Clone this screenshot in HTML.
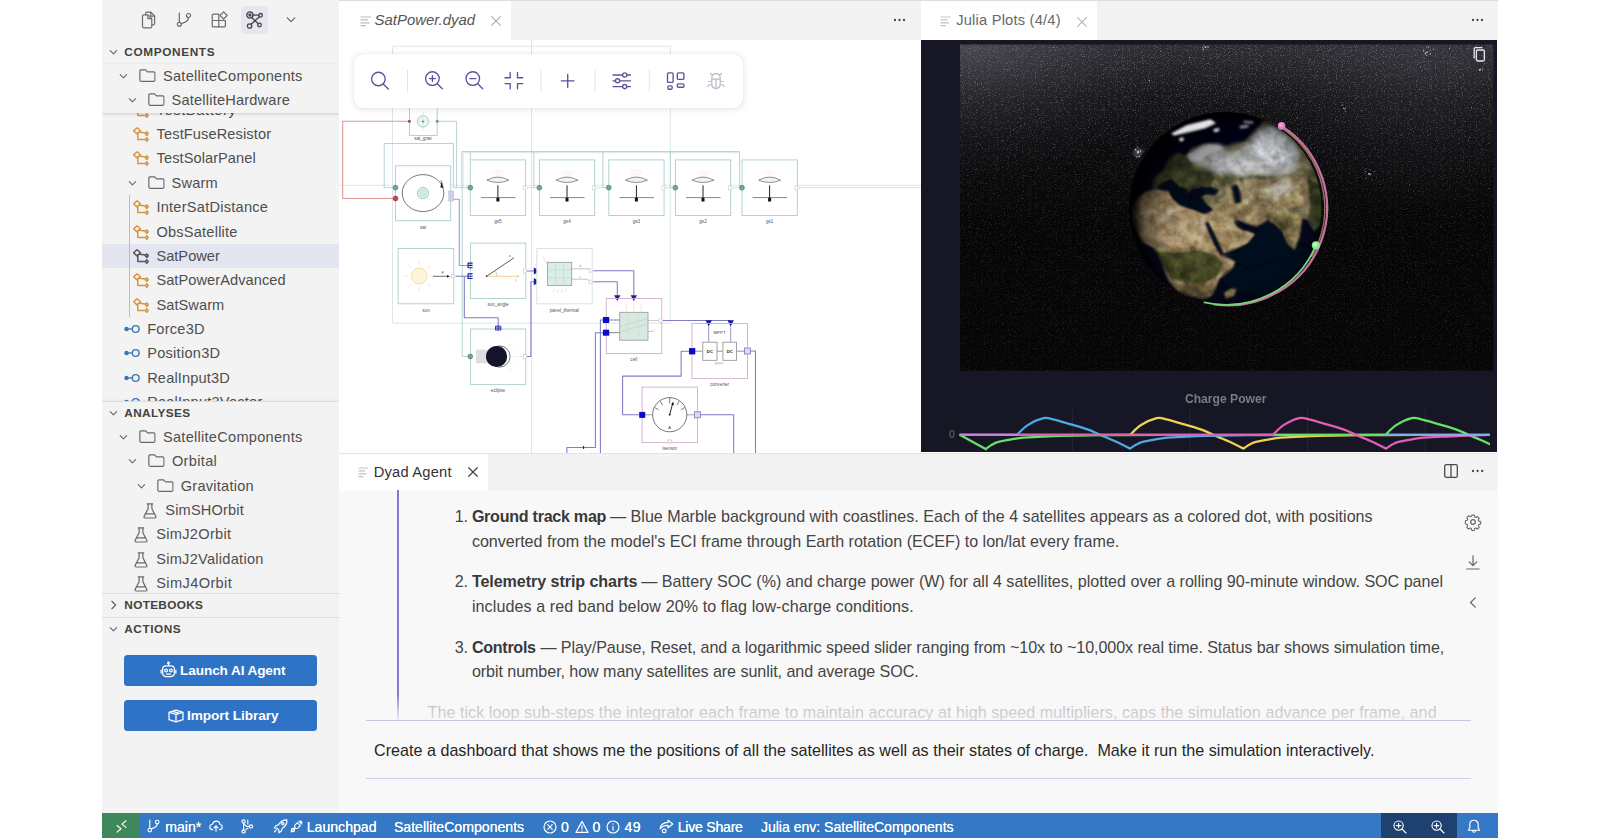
<!DOCTYPE html>
<html>
<head>
<meta charset="utf-8">
<title>Dyad Studio</title>
<style>
*{box-sizing:border-box;margin:0;padding:0}
html,body{width:1600px;height:838px;overflow:hidden;background:#fff;font-family:"Liberation Sans",sans-serif;color:#3b3b3b}
.abs{position:absolute}
#sidebar{position:absolute;left:102px;top:0;width:237px;height:813px;background:#f3f3f3;overflow:hidden}
#ed1{position:absolute;left:339px;top:0;width:582px;height:453px;background:#fff;overflow:hidden}
#ed2{position:absolute;left:921px;top:0;width:577px;height:453px;background:#fff;overflow:hidden}
#panel{position:absolute;left:339px;top:453px;width:1159px;height:360px;background:#f8f8f8;overflow:hidden}
#status{position:absolute;left:102px;top:813px;width:1396px;height:25px;background:#3579c6;color:#fff;overflow:hidden;font-size:14.3px}
.tabbar{position:absolute;left:0;top:0;width:100%;height:40px;background:#f3f3f3;border-top:1px solid #dcdcdc}
.tab{position:absolute;top:0;height:39px;background:#fff}
.row{position:absolute;left:0;width:237px;height:24px;font-size:14.6px;line-height:25px;color:#4e4e4e;white-space:nowrap}
.row span{position:absolute;top:0}
.hdr{position:absolute;left:0;width:237px;height:24px;font-size:11.8px;line-height:25px;font-weight:bold;color:#424242;white-space:nowrap}
.hdr span{position:absolute;top:0}
svg{position:absolute;overflow:visible}
.st{position:absolute;top:1px;height:25px;line-height:26px;white-space:nowrap}
</style>
</head>
<body>
<!-- SIDEBAR -->
<div id="sidebar">
<svg width="0" height="0" style="left:0;top:0"><defs>
<symbol id="chd" viewBox="0 0 10 8"><path d="M1.3 1.9 5 5.6l3.7-3.7" fill="none" stroke="#666" stroke-width="1.25" stroke-linecap="round" stroke-linejoin="round"/></symbol>
<symbol id="chr" viewBox="0 0 8 10"><path d="M1.9 1.3 5.6 5 1.9 8.7" fill="none" stroke="#666" stroke-width="1.25" stroke-linecap="round" stroke-linejoin="round"/></symbol>
<symbol id="fold" viewBox="0 0 18 14"><path d="M2.2 .9h4.6c.4 0 .7.2.9.5l.9 1.3c.2.3.5.4.9.4h6.3c.7 0 1.3.6 1.3 1.3v7.5c0 .7-.6 1.3-1.3 1.3H2.2c-.7 0-1.3-.6-1.3-1.3V2.2C.9 1.500 1.500.9 2.2.9z" fill="none" stroke="#686868" stroke-width="1.25" stroke-linejoin="round"/></symbol>
<symbol id="cmp" viewBox="0 0 16 15"><g fill="none" stroke-width="1.500" stroke-linejoin="round" stroke-linecap="round"><path d="M4 .800 7.500 3.800 4 6.900.600 3.800z" fill="rgba(255,238,208,.7)"/><path d="M6.300 5.200c2.300.300 4.200.300 6 .800"/><path d="M4.800 6.600v6h7.200"/><path d="M13.800 4.900 15.200 6.700 13.800 8.500 12.400 6.700z"/><path d="M13.800 10.800 15.200 12.600 13.800 14.300 12.400 12.600z"/></g></symbol>
<symbol id="con" viewBox="0 0 16 10"><path d="M3 5h5" stroke="#3f75b0" stroke-width="1.4"/><circle cx="2.500" cy="5" r="2.200" fill="#3f75b0"/><circle cx="11.700" cy="5" r="3.400" fill="#eef4fb" stroke="#3f75b0" stroke-width="1.400"/></symbol>
<symbol id="bk" viewBox="0 0 14 16"><path d="M4.300.900h5.400M5.100.900v4.900L1.100 13.400c-.400.800.100 1.600 1 1.600h9.800c.900 0 1.400-.800 1-1.600L8.900 5.800V.900M2.900 10.800h8.200" fill="none" stroke="#686868" stroke-width="1.200" stroke-linecap="round" stroke-linejoin="round"/></symbol>
</defs></svg>
<div class="abs" style="left:139px;top:6px;width:27px;height:28px;background:#e5e6f0;border-radius:4px"></div>
<svg style="left:39px;top:11px" width="15" height="18" viewBox="0 0 15 18"><g fill="none" stroke="#6a6a6a" stroke-width="1.2" stroke-linejoin="round"><path d="M4.600 3.800V2.400c0-.700.500-1.200 1.200-1.200h4l3.800 3.800v7.600c0 .700-.500 1.200-1.200 1.200h-1.600"/><path d="M9.700 1.300v3.800h3.800"/><path d="M1.500 5c0-.700.500-1.200 1.200-1.200h4.300l3.800 3.800v8c0 .700-.500 1.200-1.200 1.200h-6.900c-.700 0-1.200-.500-1.200-1.200z"/><path d="M6.900 3.900v3.800h3.800"/></g></svg>
<svg style="left:74px;top:12px" width="16" height="16" viewBox="0 0 16 16"><g fill="none" stroke="#6a6a6a" stroke-width="1.2" stroke-linecap="round"><circle cx="3.300" cy="12.300" r="2"/><circle cx="12.500" cy="3.500" r="2"/><path d="M3.300 10.300V1.200"/><path d="M12.500 5.500c0 3.800-3.400 5.200-7.300 6.200"/></g></svg>
<svg style="left:109px;top:11px" width="18" height="17" viewBox="0 0 18 17"><g fill="none" stroke="#6a6a6a" stroke-width="1.2" stroke-linejoin="round"><path d="M1.200 4.200c0-.600.500-1.100 1.100-1.100h5.500v12.800H2.300c-.600 0-1.100-.500-1.100-1.100z"/><path d="M1.200 9.500h13.200v5.300c0 .600-.500 1.100-1.100 1.100H7.800"/><path d="M12.600.800l3.600 3.600-3.600 3.600-3.600-3.600z"/></g></svg>
<svg style="left:143px;top:10px" width="20" height="20" viewBox="0 0 20 20"><g fill="none" stroke="#444" stroke-width="1.300" stroke-linecap="round"><circle cx="4.900" cy="5" r="3.100"/><circle cx="4.900" cy="5" r="1" /><circle cx="15.600" cy="5.300" r="1.800"/><circle cx="14.500" cy="15" r="1.800"/><circle cx="4.600" cy="16" r="2.200"/><path d="M8 5.100h5.800M6.800 7.500l6.500 6.300M14.400 6.700 6 14.300"/></g></svg>
<svg style="left:184px;top:16px" width="10" height="8"><use href="#chd"/></svg>
<div class="hdr" style="top:40px"><svg style="left:7px;top:9px" width="8.800" height="7" viewBox="0 0 10 8"><use href="#chd"/></svg><span style="left:22.29px;letter-spacing:0.635px">COMPONENTS</span></div>
<div class="row" style="top:98px;"><svg style="left:30.6px;top:5px;stroke:#d39644" width="16" height="15"><use href="#cmp"/></svg><span style="left:54.59px;letter-spacing:0.627px">TestBattery</span></div>
<div class="abs" style="left:0;top:64px;width:237px;height:49px;background:#f3f3f3;box-shadow:0 1px 3px rgba(0,0,0,.16)"></div>
<div class="row" style="top:64px;"><svg style="left:17.2px;top:9px" width="8.800" height="7" viewBox="0 0 10 8"><use href="#chd"/></svg><svg style="left:36.9px;top:5.400px" width="16.800" height="13.100" viewBox="0 0 18 14"><use href="#fold"/></svg><span style="left:60.99px;letter-spacing:0.263px">SatelliteComponents</span></div>
<div class="row" style="top:88px;"><svg style="left:25.9px;top:9px" width="8.800" height="7" viewBox="0 0 10 8"><use href="#chd"/></svg><svg style="left:45.7px;top:5.400px" width="16.800" height="13.100" viewBox="0 0 18 14"><use href="#fold"/></svg><span style="left:69.49px;letter-spacing:0.199px">SatelliteHardware</span></div>
<div class="row" style="top:122px;"><svg style="left:30.6px;top:5px;stroke:#d39644" width="16" height="15"><use href="#cmp"/></svg><span style="left:54.59px;letter-spacing:0.115px">TestFuseResistor</span></div>
<div class="row" style="top:146px;"><svg style="left:30.6px;top:5px;stroke:#d39644" width="16" height="15"><use href="#cmp"/></svg><span style="left:54.59px;letter-spacing:0.073px">TestSolarPanel</span></div>
<div class="row" style="top:171px;"><svg style="left:25.9px;top:9px" width="8.800" height="7" viewBox="0 0 10 8"><use href="#chd"/></svg><svg style="left:45.7px;top:5.400px" width="16.800" height="13.100" viewBox="0 0 18 14"><use href="#fold"/></svg><span style="left:69.49px;letter-spacing:0.199px">Swarm</span></div>
<div class="row" style="top:195px;"><svg style="left:30.6px;top:5px;stroke:#d39644" width="16" height="15"><use href="#cmp"/></svg><span style="left:54.39px;letter-spacing:0.243px">InterSatDistance</span></div>
<div class="row" style="top:220px;"><svg style="left:30.6px;top:5px;stroke:#d39644" width="16" height="15"><use href="#cmp"/></svg><span style="left:54.39px;letter-spacing:0.217px">ObsSatellite</span></div>
<div class="row" style="top:244px;background:#e3e5f0;"><svg style="left:30.6px;top:5px;stroke:#555" width="16" height="15"><use href="#cmp"/></svg><span style="left:54.39px;letter-spacing:0.028px">SatPower</span></div>
<div class="row" style="top:268px;"><svg style="left:30.6px;top:5px;stroke:#d39644" width="16" height="15"><use href="#cmp"/></svg><span style="left:54.39px;letter-spacing:0.074px">SatPowerAdvanced</span></div>
<div class="row" style="top:293px;"><svg style="left:30.6px;top:5px;stroke:#d39644" width="16" height="15"><use href="#cmp"/></svg><span style="left:54.39px;letter-spacing:0.085px">SatSwarm</span></div>
<div class="abs" style="left:27px;top:195px;width:1px;height:122px;background:#bcbcbc"></div>
<div class="row" style="top:317px;"><svg style="left:22.0px;top:7px" width="16" height="10"><use href="#con"/></svg><span style="left:45.19px;letter-spacing:0.248px">Force3D</span></div>
<div class="row" style="top:341px;"><svg style="left:22.0px;top:7px" width="16" height="10"><use href="#con"/></svg><span style="left:45.19px;letter-spacing:0.262px">Position3D</span></div>
<div class="row" style="top:366px;"><svg style="left:22.0px;top:7px" width="16" height="10"><use href="#con"/></svg><span style="left:45.19px;letter-spacing:0.142px">RealInput3D</span></div>
<div class="row" style="top:390px;"><svg style="left:22.0px;top:7px" width="16" height="10"><use href="#con"/></svg><span style="left:45.19px;letter-spacing:0.207px">RealInput3Vector</span></div>
<div class="abs" style="left:0;top:401px;width:237px;height:412px;background:#f3f3f3;border-top:1px solid #dcdcdc;box-shadow:0 -1px 2px rgba(0,0,0,.05)"></div>
<div class="hdr" style="top:401px"><svg style="left:7px;top:9px" width="8.800" height="7" viewBox="0 0 10 8"><use href="#chd"/></svg><span style="left:22.29px;letter-spacing:0.369px">ANALYSES</span></div>
<div class="row" style="top:425px;"><svg style="left:17.2px;top:9px" width="8.800" height="7" viewBox="0 0 10 8"><use href="#chd"/></svg><svg style="left:36.9px;top:5.400px" width="16.800" height="13.100" viewBox="0 0 18 14"><use href="#fold"/></svg><span style="left:60.99px;letter-spacing:0.258px">SatelliteComponents</span></div>
<div class="row" style="top:449px;"><svg style="left:25.9px;top:9px" width="8.800" height="7" viewBox="0 0 10 8"><use href="#chd"/></svg><svg style="left:45.7px;top:5.400px" width="16.800" height="13.100" viewBox="0 0 18 14"><use href="#fold"/></svg><span style="left:69.89px;letter-spacing:0.331px">Orbital</span></div>
<div class="row" style="top:474px;"><svg style="left:34.8px;top:9px" width="8.800" height="7" viewBox="0 0 10 8"><use href="#chd"/></svg><svg style="left:54.6px;top:5.400px" width="16.800" height="13.100" viewBox="0 0 18 14"><use href="#fold"/></svg><span style="left:78.79px;letter-spacing:0.229px">Gravitation</span></div>
<div class="row" style="top:498px;"><svg style="left:40.6px;top:4.500px" width="14" height="16"><use href="#bk"/></svg><span style="left:63.29px;letter-spacing:0.156px">SimSHOrbit</span></div>
<div class="row" style="top:522px;"><svg style="left:31.8px;top:4.500px" width="14" height="16"><use href="#bk"/></svg><span style="left:54.19px;letter-spacing:0.302px">SimJ2Orbit</span></div>
<div class="row" style="top:547px;"><svg style="left:31.8px;top:4.500px" width="14" height="16"><use href="#bk"/></svg><span style="left:54.19px;letter-spacing:0.261px">SimJ2Validation</span></div>
<div class="row" style="top:571px;"><svg style="left:31.8px;top:4.500px" width="14" height="16"><use href="#bk"/></svg><span style="left:54.19px;letter-spacing:0.382px">SimJ4Orbit</span></div>
<div class="abs" style="left:0;top:593px;width:237px;height:220px;background:#f3f3f3;border-top:1px solid #dcdcdc"></div>
<div class="hdr" style="top:593px"><svg style="left:8px;top:7px" width="8" height="10"><use href="#chr"/></svg><span style="left:22.29px;letter-spacing:0.331px">NOTEBOOKS</span></div>
<div class="abs" style="left:0;top:617px;width:237px;height:1px;background:#dcdcdc"></div>
<div class="hdr" style="top:617px"><svg style="left:7px;top:9px" width="8.800" height="7" viewBox="0 0 10 8"><use href="#chd"/></svg><span style="left:22.29px;letter-spacing:0.561px">ACTIONS</span></div>
<div style="position:absolute;left:22px;width:193px;height:31px;background:#2f73c7;border-radius:3.500px;color:#fff;font-weight:bold;font-size:13.600px;line-height:31px;white-space:nowrap;top:655px"><svg style="left:36px;top:6px" width="17" height="18" viewBox="0 0 17 18"><g fill="none" stroke="#fff" stroke-width="1.250" stroke-linecap="round"><rect x="2.600" y="4.900" width="11.800" height="10.600" rx="3.400"/><path d="M8.500 4.700V2.800M1.100 9.200v2.800M15.900 9.200v2.800M6.400 13h4.200"/><circle cx="8.500" cy="2" r=".800" fill="#fff"/><circle cx="6.100" cy="9.400" r="1.400"/><circle cx="10.900" cy="9.400" r="1.400"/></g></svg><span class="abs" style="top:0;left:56.12px;letter-spacing:-0.112px">Launch AI Agent</span></div>
<div style="position:absolute;left:22px;width:193px;height:31px;background:#2f73c7;border-radius:3.500px;color:#fff;font-weight:bold;font-size:13.600px;line-height:31px;white-space:nowrap;top:700px"><svg style="left:44px;top:9px" width="16" height="14" viewBox="0 0 16 14"><g fill="none" stroke="#fff" stroke-width="1.250" stroke-linejoin="round"><path d="M1 3.300 8 1.200l7 2.100v7.400L8 12.800 1 10.700z"/><path d="M1 3.300l7 2 7-2M8 5.300v7.500M4.500 2.300l7 2"/></g></svg><span class="abs" style="top:0;left:62.92px;letter-spacing:-0.031px">Import Library</span></div>
</div>

<!-- EDITOR 1 -->
<div id="ed1">
<svg style="left:0;top:40px" width="582" height="413" viewBox="339 40 582 413" font-family="Liberation Sans, sans-serif">
<g fill="none" stroke="#dbe6ea" stroke-width="1">
<path d="M392.500 323.200V46.300H670.300V323.200H392.500"/>
<path d="M531.500 40V453"/>
<path d="M339 185.300H921" stroke="#dfe7e6"/>
</g>
<path d="M409.400 121.300H342.700V198.500H395.500" fill="none" stroke="#e09a9a" stroke-width="1.100"/>
<g fill="none" stroke="#a9cfce" stroke-width=".850">
<path d="M437.200 121.300H456.600V187.700H470.300"/>
<path d="M395.500 187.700H384.200V143.500H453.400V187.700H456.600"/>
<path d="M461.800 187.700V151.500H739.500V187.700H742"/>
<path d="M463 187.700V152.700H738.300" opacity=".6"/>
<path d="M470.300 151.500V160M533.900 151.500V187.700H539.400M602.900 151.500V187.700H608.800M670.300 151.500V187.700H675.400"/>
<path d="M527.700 187.700H533.900M596.800 187.700H602.900M666 187.700H670.300M732.300 187.700H739.500M799 187.700H921" opacity=".7"/>
<path d="M462.200 187.700V356.500H470.300"/>
</g>
<rect x="409.500" y="107" width="27.700" height="28.400" fill="#fff" stroke="#a9cfce" stroke-width=".900"/>
<circle cx="423" cy="121.400" r="5.600" fill="#eef6f5" stroke="#9cc3c0" stroke-width=".900"/><path d="M423 112v18.800M413.600 121.400h18.800" stroke="#cfe0df" stroke-width=".600"/><circle cx="423" cy="121.400" r="1" fill="#777"/>
<circle cx="409.400" cy="121.300" r="1.500" fill="#8a4a52"/><circle cx="437.200" cy="121.300" r="1.500" fill="#6a9a90"/>
<text x="423" y="140" font-size="4.6" fill="#555" text-anchor="middle" font-weight="normal">sat_grav</text>
<rect x="395.500" y="165.800" width="55.200" height="54.900" fill="#fff" stroke="#a9cfce" stroke-width=".900"/>
<ellipse cx="423" cy="193.100" rx="20.800" ry="18.500" fill="none" stroke="#555" stroke-width=".800"/>
<circle cx="423" cy="193.100" r="5.600" fill="#e4f1f0" stroke="#9cc3c0" stroke-width=".900"/><circle cx="423" cy="193.100" r="3.300" fill="#d5eae8" stroke="#b5d5d2" stroke-width=".500"/>
<path d="M441.500 182.500l2.200 5.300-3.400-.400z" fill="#222"/><path d="M441 180.500l1.600 4" stroke="#222" stroke-width=".700"/>
<rect x="448.700" y="191" width="5" height="10" fill="#cfcfea" stroke="#b8b8de" stroke-width=".500"/>
<circle cx="395.500" cy="187.700" r="2.400" fill="#6fa79b" stroke="#4c8074" stroke-width=".700"/><circle cx="395.500" cy="198.500" r="2.400" fill="#c24a58" stroke="#9a3040" stroke-width=".700"/>
<text x="423" y="228.5" font-size="4.6" fill="#555" text-anchor="middle" font-weight="normal">sat</text>
<rect x="470.3" y="159.900" width="55.300" height="55.600" fill="#fff" stroke="#a9cfce" stroke-width=".900"/>
<path d="M492.90000000000003 174.500q5-2.600 10 0M494.40000000000003 176.500q3.500-1.800 7 0M491.40000000000003 172.300q6.500-3.200 13 0" fill="none" stroke="#e6e9ea" stroke-width=".700"/>
<path d="M486.90000000000003 180.200q11-6.200 22 0q-11 4.600-22 0z" fill="#eef3f3" stroke="#666" stroke-width=".700"/>
<path d="M497.90000000000003 185.300V198" stroke="#222" stroke-width="1"/><path d="M480.90000000000003 197.600H515.4000000000001" stroke="#555" stroke-width=".700"/><rect x="496.40000000000003" y="197.700" width="3" height="3.800" fill="#111"/>
<circle cx="470.3" cy="187.700" r="2.400" fill="#6fa79b" stroke="#4c8074" stroke-width=".700"/>
<path d="M523.3 185.400l4.600 2.400-4.600 2.400z" fill="#fff" stroke="#c4cccc" stroke-width=".600"/>
<text x="497.90000000000003" y="223" font-size="4.6" fill="#555" text-anchor="middle" font-weight="normal">gs5</text>
<rect x="539.4" y="159.900" width="55.300" height="55.600" fill="#fff" stroke="#a9cfce" stroke-width=".900"/>
<path d="M562.0 174.500q5-2.600 10 0M563.5 176.500q3.500-1.800 7 0M560.5 172.300q6.500-3.200 13 0" fill="none" stroke="#e6e9ea" stroke-width=".700"/>
<path d="M556.0 180.200q11-6.200 22 0q-11 4.600-22 0z" fill="#eef3f3" stroke="#666" stroke-width=".700"/>
<path d="M567.0 185.300V198" stroke="#222" stroke-width="1"/><path d="M550.0 197.600H584.5" stroke="#555" stroke-width=".700"/><rect x="565.5" y="197.700" width="3" height="3.800" fill="#111"/>
<circle cx="539.4" cy="187.700" r="2.400" fill="#6fa79b" stroke="#4c8074" stroke-width=".700"/>
<path d="M592.4 185.400l4.600 2.400-4.600 2.400z" fill="#fff" stroke="#c4cccc" stroke-width=".600"/>
<text x="567.0" y="223" font-size="4.6" fill="#555" text-anchor="middle" font-weight="normal">gs4</text>
<rect x="608.8" y="159.900" width="55.300" height="55.600" fill="#fff" stroke="#a9cfce" stroke-width=".900"/>
<path d="M631.4 174.500q5-2.600 10 0M632.9 176.500q3.500-1.800 7 0M629.9 172.300q6.500-3.200 13 0" fill="none" stroke="#e6e9ea" stroke-width=".700"/>
<path d="M625.4 180.200q11-6.200 22 0q-11 4.600-22 0z" fill="#eef3f3" stroke="#666" stroke-width=".700"/>
<path d="M636.4 185.300V198" stroke="#222" stroke-width="1"/><path d="M619.4 197.600H653.9" stroke="#555" stroke-width=".700"/><rect x="634.9" y="197.700" width="3" height="3.800" fill="#111"/>
<circle cx="608.8" cy="187.700" r="2.400" fill="#6fa79b" stroke="#4c8074" stroke-width=".700"/>
<path d="M661.8 185.400l4.600 2.400-4.600 2.400z" fill="#fff" stroke="#c4cccc" stroke-width=".600"/>
<text x="636.4" y="223" font-size="4.6" fill="#555" text-anchor="middle" font-weight="normal">gs3</text>
<rect x="675.4" y="159.900" width="55.300" height="55.600" fill="#fff" stroke="#a9cfce" stroke-width=".900"/>
<path d="M698.0 174.500q5-2.600 10 0M699.5 176.500q3.500-1.800 7 0M696.5 172.300q6.500-3.200 13 0" fill="none" stroke="#e6e9ea" stroke-width=".700"/>
<path d="M692.0 180.200q11-6.200 22 0q-11 4.600-22 0z" fill="#eef3f3" stroke="#666" stroke-width=".700"/>
<path d="M703.0 185.300V198" stroke="#222" stroke-width="1"/><path d="M686.0 197.600H720.5" stroke="#555" stroke-width=".700"/><rect x="701.5" y="197.700" width="3" height="3.800" fill="#111"/>
<circle cx="675.4" cy="187.700" r="2.400" fill="#6fa79b" stroke="#4c8074" stroke-width=".700"/>
<path d="M728.4 185.400l4.600 2.400-4.600 2.400z" fill="#fff" stroke="#c4cccc" stroke-width=".600"/>
<text x="703.0" y="223" font-size="4.6" fill="#555" text-anchor="middle" font-weight="normal">gs2</text>
<rect x="742" y="159.900" width="55.300" height="55.600" fill="#fff" stroke="#a9cfce" stroke-width=".900"/>
<path d="M764.6 174.500q5-2.600 10 0M766.1 176.500q3.500-1.800 7 0M763.1 172.300q6.500-3.200 13 0" fill="none" stroke="#e6e9ea" stroke-width=".700"/>
<path d="M758.6 180.200q11-6.200 22 0q-11 4.600-22 0z" fill="#eef3f3" stroke="#666" stroke-width=".700"/>
<path d="M769.6 185.300V198" stroke="#222" stroke-width="1"/><path d="M752.6 197.600H787.1" stroke="#555" stroke-width=".700"/><rect x="768.1" y="197.700" width="3" height="3.800" fill="#111"/>
<circle cx="742" cy="187.700" r="2.400" fill="#6fa79b" stroke="#4c8074" stroke-width=".700"/>
<path d="M795 185.400l4.600 2.400-4.600 2.400z" fill="#fff" stroke="#c4cccc" stroke-width=".600"/>
<text x="769.6" y="223" font-size="4.6" fill="#555" text-anchor="middle" font-weight="normal">gs1</text>
<g fill="none" stroke="#7c7cc8" stroke-width="1.050" stroke-linejoin="round">
<path d="M453.700 199.200H459.300V265.400H467.600" opacity=".8"/>
<path d="M455.800 276.200H467.600"/>
<path d="M464.300 276.200V317.700H498.200V326.100"/>
<path d="M526.400 271H534.300"/>
<path d="M526.400 356.500H530.900V281.700H534.300"/>
<path d="M593.300 270.800H633.800V295.700"/>
<path d="M593.300 281.800H617.300V295.700"/>
<path d="M603 320H600.400V453"/>
<path d="M603 332.700H595.400V447.500H566.900V453"/>
<path d="M583.600 446V449" stroke="#223"/>
<path d="M662.500 320.500H730.700"/>
<path d="M689 351.200H681.100V376.100H622.600V414.800H639.200"/>
<path d="M750.400 351H755.500V453"/>
<path d="M700.400 414.800H733.700V453"/>
</g>
<rect x="398.100" y="248.500" width="55.700" height="55.300" fill="#fff" stroke="#a9cfce" stroke-width=".900"/>
<g stroke="#f6e6c6" stroke-width=".900"><path d="M430.2 276.0L435.2 276.0"/><path d="M427.0 283.8L430.5 287.3"/><path d="M419.2 287.0L419.2 292.0"/><path d="M411.4 283.8L407.9 287.3"/><path d="M408.2 276.0L403.2 276.0"/><path d="M411.4 268.2L407.9 264.7"/><path d="M419.2 265.0L419.2 260.0"/><path d="M427.0 268.2L430.5 264.7"/></g>
<circle cx="419.200" cy="276" r="8" fill="#fdf4dc" stroke="#f2dcae" stroke-width=".900"/>
<path d="M433 276.300H448" stroke="#333" stroke-width=".700"/><path d="M447 274.900l3 1.400-3 1.400z" fill="#222"/>
<text x="442.500" y="274" font-size="3.600" fill="#333" text-anchor="middle" font-style="italic">F</text>
<path d="M451.600 274.200l4.200 2-4.200 2z" fill="#fff" stroke="#bbb" stroke-width=".500"/>
<text x="426" y="311.6" font-size="4.6" fill="#555" text-anchor="middle" font-weight="normal">sun</text>
<rect x="470.500" y="243.100" width="55.300" height="55.500" fill="#fff" stroke="#a9cfce" stroke-width=".900"/>
<path d="M486.500 276.300H518" stroke="#f0c57c" stroke-width=".800"/><path d="M517 275l2.800 1.300-2.800 1.300z" fill="#f0c57c"/>
<path d="M486.500 276.300L514 257.800" stroke="#333" stroke-width=".800"/><circle cx="486.500" cy="276.300" r=".800" fill="#222"/>
<path d="M497 276.300a10 10 0 0 0-1.800-5.800" fill="none" stroke="#8fc5bf" stroke-width=".700"/>
<text x="509" y="257" font-size="3.200" fill="#333">x</text><text x="515" y="280.500" font-size="3.200" fill="#c9a45c">y</text>
<path d="M468 262.7V268.09999999999997M468 263.09999999999997h4.600M468 265.4h4.600M468 267.7h4.600" stroke="#1c1c9c" stroke-width="1.100" fill="none"/>
<path d="M468 273.5V278.9M468 273.9h4.600M468 276.2h4.600M468 278.5h4.600" stroke="#1c1c9c" stroke-width="1.100" fill="none"/>
<rect x="523.300" y="268.900" width="3.100" height="4.200" fill="#fff" stroke="#bbb" stroke-width=".500"/>
<text x="498" y="306" font-size="4.6" fill="#555" text-anchor="middle" font-weight="normal">sun_angle</text>
<path d="M533.800 267.400l6.300 3.600-6.300 3.600zM533.800 278.100l6.300 3.600-6.300 3.600z" fill="#1c1c9c"/>
<rect x="536.800" y="248.500" width="55.400" height="55.300" fill="#fff" stroke="#d9e2e2" stroke-width="1"/>
<path d="M542.700 256.500l4 6M545.500 261.500l2 3" stroke="#f3dfa8" stroke-width=".800"/>
<rect x="547.400" y="262.300" width="24.300" height="23.300" fill="#dcece8" stroke="#999" stroke-width=".800"/>
<path d="M555.500 262.300v23.300M563.600 262.300v23.300M547.400 270.100h24.300M547.400 277.800h24.300" stroke="#b9d8c9" stroke-width=".600"/>
<path d="M553 293l1.500-4M557 293.500l1.500-4M561 293l1.500-4M565 292.500l1.500-4" stroke="#ecdcdc" stroke-width=".800"/>
<path d="M571.700 268.800H589M571.700 279.200H587l2.500 2.400" stroke="#999" stroke-width=".600" fill="none"/>
<text x="579.500" y="267.300" font-size="3" fill="#555">a</text><text x="579.500" y="278" font-size="3" fill="#888">c</text>
<path d="M589.100 268.400l4.200 2.300-4.200 2.300zM589.100 279.500l4.200 2.300-4.200 2.300z" fill="#fff" stroke="#bbb" stroke-width=".500"/>
<text x="564.3" y="311.6" font-size="4.6" fill="#555" text-anchor="middle" font-weight="normal">panel_thermal</text>
<path d="M614.100 295.200h6.400l-3.200 5.900zM630.600 295.200h6.400l-3.200 5.900z" fill="#1c1c9c"/>
<rect x="606.300" y="298.500" width="55.500" height="55.100" fill="none" stroke="#d2aed0" stroke-width=".900"/>
<path d="M626.300 303.500v8.800M633.800 303.500v8.800M641.200 303.500v8.800" stroke="#f3e3b6" stroke-width=".800"/>
<rect x="619.700" y="312.300" width="28.300" height="27.900" fill="#d7e9e0" stroke="#999" stroke-width=".800"/>
<path d="M619.700 326.500l28.300-8M619.700 332l28.300-8" stroke="#b6d3c2" stroke-width=".600"/><path d="M629 312.300v27.900M638.500 312.300v27.900" stroke="#c5ddd0" stroke-width=".500"/>
<path d="M609 320H619.700M609 332.700H619.700" stroke="#666" stroke-width=".800"/><path d="M648 320.500H658.500M648 331.500h5l1.500-2" stroke="#aaa" stroke-width=".600" fill="none"/>
<rect x="602.900" y="317" width="6.300" height="6" fill="#0a0acc"/><rect x="602.900" y="329.700" width="6.300" height="6" fill="#0a0acc"/>
<circle cx="660.400" cy="320.500" r="2" fill="#fff" stroke="#bbb" stroke-width=".600"/>
<text x="633.8" y="361.4" font-size="4.6" fill="#555" text-anchor="middle" font-weight="normal">cell</text>
<path d="M705.500 320.200h6.400l-3.200 6.300zM727.500 320.200h6.400l-3.200 6.300z" fill="#1c1c9c"/>
<rect x="691.900" y="323.500" width="55.600" height="55.100" fill="none" stroke="#d2aed0" stroke-width=".900"/>
<path d="M708.700 326.400V342.200M730.700 326.400V342.200" stroke="#7c7cc8" stroke-width=".800"/>
<text x="719.5" y="333.6" font-size="4.4" fill="#444" text-anchor="middle" font-weight="normal">MPPT</text>
<path d="M695 351.200H702.800M717 351.200h5.900M736.600 351.200H745" stroke="#777" stroke-width=".800"/>
<rect x="702.800" y="342.200" width="14.200" height="18.100" fill="#fff" stroke="#8a8a8a" stroke-width=".800"/><rect x="722.900" y="342.200" width="13.700" height="18.100" fill="#fff" stroke="#8a8a8a" stroke-width=".800"/>
<text x="709.9" y="352.8" font-size="4.2" fill="#222" text-anchor="middle" font-weight="bold">DC</text>
<text x="729.8" y="352.8" font-size="4.2" fill="#222" text-anchor="middle" font-weight="bold">DC</text>
<text x="719.1" y="365.2" font-size="3.6" fill="#aaa" text-anchor="middle" font-weight="normal">RFFT</text>
<rect x="689" y="348.100" width="6.300" height="6.300" fill="#0a0acc"/>
<rect x="744.500" y="348" width="6" height="6" fill="#d6dcf3" stroke="#7a7ac4" stroke-width=".800"/>
<text x="719.5" y="386.4" font-size="4.6" fill="#555" text-anchor="middle" font-weight="normal">converter</text>
<rect x="470.500" y="329" width="55.300" height="55.400" fill="#fff" stroke="#a9cfce" stroke-width=".900"/>
<path d="M511 350l3-2.500M512.500 356.500h4M511 363l3 2.500M509 345l2-3M509 368l2 3" stroke="#f6ecd0" stroke-width=".800"/>
<rect x="476" y="349.700" width="12" height="13.600" fill="#dedede"/>
<circle cx="499.500" cy="356.500" r="10.600" fill="#fff" stroke="#333" stroke-width=".700"/><circle cx="496.600" cy="356.500" r="10.600" fill="#14142a"/>
<circle cx="470.300" cy="356.500" r="2.400" fill="#6fa79b" stroke="#4c8074" stroke-width=".700"/>
<path d="M518 356.500h5" stroke="#ddd" stroke-width=".600"/><rect x="523.300" y="354.500" width="3.100" height="4" fill="#fff" stroke="#bbb" stroke-width=".500"/>
<path d="M495.500 326.100h5.400v4h-5.400zM495.500 328.100h5.400M498.200 326.100v4" fill="#c8c8ee" stroke="#1c1c9c" stroke-width=".800"/>
<text x="498" y="391.8" font-size="4.6" fill="#555" text-anchor="middle" font-weight="normal">eclipse</text>
<rect x="642.100" y="387.100" width="55.400" height="55.500" fill="none" stroke="#d2aed0" stroke-width=".900"/>
<path d="M645 414.800H652.600M686.800 414.800H694.500" stroke="#888" stroke-width=".800"/>
<circle cx="669.700" cy="414.700" r="17.100" fill="#fff" stroke="#666" stroke-width=".900"/>
<path d="M669.700 397.600v5.800M660.300 401.200l2.200 4M679.100 401.200l-2.200 4M654.800 407.600l3.800 2.200M684.600 407.600l-3.800 2.200" stroke="#444" stroke-width=".700"/>
<path d="M669.700 414.700L672.400 404.500" stroke="#111" stroke-width=".900"/><path d="M671.200 404.800l1.900-3.400.9 3.900z" fill="#111"/><circle cx="669.700" cy="414.700" r=".900" fill="#111"/>
<text x="669.7" y="428.6" font-size="4" fill="#333" text-anchor="middle" font-weight="normal">A</text>
<rect x="639.200" y="411.900" width="6" height="6" fill="#0a0acc"/>
<rect x="694.500" y="411.800" width="6" height="6" fill="#d6dcf3" stroke="#7a7ac4" stroke-width=".800"/>
<path d="M667.200 440h5l-2.500 4.200z" fill="#fff" stroke="#bbb" stroke-width=".600"/>
<text x="669.7" y="450" font-size="4.6" fill="#555" text-anchor="middle" font-weight="normal">isensor</text>
</svg>
<div class="abs" style="left:14.500px;top:53.500px;width:389.500px;height:54.500px;background:#fff;border-radius:9px;box-shadow:0 1px 7px rgba(40,40,80,.13),0 0 1px rgba(40,40,80,.18)"></div>
<svg style="left:0;top:40px" width="582" height="80" viewBox="339 40 582 80"><g fill="none" stroke="#5b549c" stroke-width="1.350" stroke-linecap="round" stroke-linejoin="round">
<path d="M407.500 70.500V91M541 70.500V91M595.100 70.500V91M649.200 70.500V91" stroke="#e4e4e8" stroke-width="1"/>
<circle cx="378.400" cy="79" r="6.800"/><path d="M383.400 84.200l4.900 4.900"/>
<circle cx="432.400" cy="78.600" r="6.800"/><path d="M437.400 83.800l4.900 4.900M429.400 78.600h6M432.400 75.600v6"/>
<circle cx="472.800" cy="78.600" r="6.800"/><path d="M477.800 83.800l4.900 4.900M469.800 78.600h6"/>
<path d="M505 77.700h5.200v-5.200M522.700 77.700h-5.200v-5.200M505 83.600h5.200v5.200M522.700 83.600h-5.200v5.200"/>
<path d="M561.300 80.800h12.800M567.700 74.400v12.800"/>
<path d="M613 75h9.500M627 75h3.500M613 80.800h2.300M620 80.800h10.500M613 86.600h9.500M627 86.600h3.500"/><circle cx="624.700" cy="75" r="2.100"/><circle cx="617.600" cy="80.800" r="2.100"/><circle cx="624.700" cy="86.600" r="2.100"/>
<rect x="667.500" y="72.800" width="5.600" height="9.600" rx="1"/><rect x="677.300" y="72.800" width="6.600" height="6.600" rx="1"/><rect x="667.900" y="85.800" width="4.200" height="3.400" rx="1"/><rect x="677.300" y="83.800" width="6.600" height="3.400" rx="1"/>
<g stroke="#b9b8cc" stroke-width="1.200"><path d="M711.800 78.200c0-2.800 1.800-4.500 4.200-4.500s4.200 1.700 4.200 4.500v5.600c0 2.800-1.800 4.700-4.200 4.700s-4.200-1.900-4.200-4.700zM711.800 79.200h8.400M716 79.200v9M711.800 81.500h-3M711.800 85h-3l-1 1.500M720.200 81.500h3M720.200 85h3l1 1.500M712.500 75.500l-2-2.300M719.500 75.500l2-2.300"/></g>
</g></svg>
<div class="tabbar"><div class="tab" style="left:0;width:172px"></div>
<svg style="left:21px;top:14.500px" width="12" height="11" viewBox="0 0 12 11"><path d="M.500 1h10.500M.500 3.900h7.500M.500 6.800h9M.500 9.700h5.500" stroke="#bdbdbd" stroke-width="1.200"/></svg>
<span class="abs" style="top:0;line-height:39px;font-size:14.9px;font-style:italic;color:#555;white-space:nowrap;left:35.60px;letter-spacing:0.003px">SatPower.dyad</span>
<svg style="left:151.500px;top:15px" width="10" height="10" viewBox="0 0 10 10"><path d="M.700.700l8.600 8.600M9.300.700.700 9.300" stroke="#adadad" stroke-width="1.150" stroke-linecap="round"/></svg>
<svg style="left:554px;top:17px" width="14" height="4" viewBox="0 0 14 4"><circle cx="2" cy="2" r="1.150" fill="#444"/><circle cx="6.500" cy="2" r="1.150" fill="#444"/><circle cx="11" cy="2" r="1.150" fill="#444"/></svg>
</div>
</div>

<!-- EDITOR 2 -->
<div id="ed2">
<div class="abs" style="left:0;top:40px;width:576px;height:412px;background:#161624"></div>
<svg style="left:0;top:40px" width="577" height="413" viewBox="921 40 577 413" font-family="Liberation Sans, sans-serif">
<defs>
<filter id="st1" x="0" y="0" width="100%" height="100%" color-interpolation-filters="sRGB"><feTurbulence type="fractalNoise" baseFrequency="0.85" numOctaves="2" seed="7" result="n"/><feColorMatrix in="n" type="matrix" values="0 0 0 0 .64  0 0 0 0 .62  0 0 0 0 .66  3 3 3 0 -4.750"/></filter>
<filter id="st2" x="0" y="0" width="100%" height="100%" color-interpolation-filters="sRGB"><feTurbulence type="fractalNoise" baseFrequency="0.55" numOctaves="1" seed="23" result="n"/><feColorMatrix in="n" type="matrix" values="0 0 0 0 .9  0 0 0 0 .88  0 0 0 0 .96  6 6 6 0 -12.100"/></filter>
<filter id="b1"><feGaussianBlur stdDeviation="3.2"/></filter>
<filter id="b2"><feGaussianBlur stdDeviation="8"/></filter>
<filter id="b3" filterUnits="userSpaceOnUse" x="760" y="-140" width="940" height="640"><feGaussianBlur stdDeviation="24"/></filter>
<filter id="tex" x="0" y="0" width="100%" height="100%" color-interpolation-filters="sRGB"><feTurbulence type="fractalNoise" baseFrequency="0.09" numOctaves="4" seed="11"/><feColorMatrix type="matrix" values=".6 .6 .6 0 -.4  .6 .6 .6 0 -.4  .6 .6 .6 0 -.4  0 0 0 0 1"/></filter>
<filter id="tex2" x="0" y="0" width="100%" height="100%" color-interpolation-filters="sRGB"><feTurbulence type="fractalNoise" baseFrequency="0.022" numOctaves="4" seed="11"/><feColorMatrix type="matrix" values=".6 .6 .6 0 -.4  .6 .6 .6 0 -.4  .6 .6 .6 0 -.4  0 0 0 0 1"/></filter>
<filter id="tex3" x="0" y="0" width="100%" height="100%" color-interpolation-filters="sRGB"><feTurbulence type="fractalNoise" baseFrequency="0.03" numOctaves="3" seed="4"/><feColorMatrix type="matrix" values=".8 .8 .8 0 -.45  .8 .8 .8 0 -.45  .8 .8 .8 0 -.45  0 0 0 0 1"/></filter>
<filter id="b05"><feGaussianBlur stdDeviation=".5"/></filter>
<linearGradient id="hz1" x1="0" y1="44" x2="0" y2="230" gradientUnits="userSpaceOnUse"><stop offset="0" stop-color="#4b4852" stop-opacity=".6"/><stop offset=".12" stop-color="#45424c" stop-opacity=".5"/><stop offset=".3" stop-color="#3a3841" stop-opacity=".3"/><stop offset=".55" stop-color="#34323a" stop-opacity=".13"/><stop offset="1" stop-color="#34323a" stop-opacity="0"/></linearGradient>
<radialGradient id="hz2" cx="975" cy="40" r="190" gradientUnits="userSpaceOnUse" gradientTransform="translate(975 40) scale(1 .75) translate(-975 -40)"><stop offset="0" stop-color="#8a8694" stop-opacity=".3"/><stop offset=".35" stop-color="#7a7684" stop-opacity=".19"/><stop offset=".7" stop-color="#6a6674" stop-opacity=".07"/><stop offset="1" stop-color="#6a6674" stop-opacity="0"/></radialGradient>
<radialGradient id="hz3" cx="1420" cy="60" r="150" gradientUnits="userSpaceOnUse"><stop offset="0" stop-color="#5a5764" stop-opacity=".22"/><stop offset="1" stop-color="#5a5764" stop-opacity="0"/></radialGradient>
<linearGradient id="spg" x1="0" y1="44" x2="0" y2="371" gradientUnits="userSpaceOnUse"><stop offset="0" stop-color="#fff"/><stop offset=".25" stop-color="#bbb"/><stop offset=".5" stop-color="#6a6a6a"/><stop offset="1" stop-color="#4a4a4a"/></linearGradient>
<mask id="spm" maskUnits="userSpaceOnUse" x="960" y="44" width="534" height="327"><rect x="960" y="44" width="534" height="327" fill="url(#spg)"/></mask>
<clipPath id="imgc"><rect x="960" y="44.400" width="533.500" height="326.400"/></clipPath>
<clipPath id="earthc"><circle cx="1225.300" cy="208.200" r="96.300"/></clipPath>
<radialGradient id="limb" cx="1235" cy="215" r="100" gradientUnits="userSpaceOnUse"><stop offset="0" stop-color="#000" stop-opacity="0"/><stop offset=".72" stop-color="#000" stop-opacity="0"/><stop offset=".93" stop-color="#000" stop-opacity=".35"/><stop offset="1" stop-color="#000" stop-opacity=".8"/></radialGradient>
<linearGradient id="night" x1="1128" y1="150" x2="1200" y2="215" gradientUnits="userSpaceOnUse"><stop offset="0" stop-color="#000" stop-opacity=".75"/><stop offset=".55" stop-color="#000" stop-opacity=".25"/><stop offset="1" stop-color="#000" stop-opacity="0"/></linearGradient>
</defs>
<g clip-path="url(#imgc)">
<rect x="960" y="44" width="534" height="327" fill="#070607"/>
<rect x="960" y="44" width="534" height="327" fill="url(#hz1)"/><rect x="960" y="44" width="534" height="327" fill="url(#hz2)"/><rect x="960" y="44" width="534" height="327" fill="url(#hz3)"/>
<g mask="url(#spm)"><rect x="960" y="44" width="534" height="327" filter="url(#st1)" opacity=".42"/>
<rect x="960" y="44" width="534" height="327" filter="url(#st2)" opacity=".6"/></g>
<circle cx="1135.7" cy="149.8" r="0.75" fill="#cfd0e8" opacity="0.97"/>
<circle cx="1137.7" cy="147.6" r="0.36" fill="#cfd0e8" opacity="0.73"/>
<circle cx="1140.5" cy="151.1" r="0.80" fill="#cfd0e8" opacity="0.56"/>
<circle cx="1137.4" cy="152.1" r="0.62" fill="#cfd0e8" opacity="0.79"/>
<circle cx="1138.5" cy="152.0" r="0.49" fill="#cfd0e8" opacity="0.96"/>
<circle cx="1138.0" cy="151.7" r="0.75" fill="#cfd0e8" opacity="0.57"/>
<circle cx="1137.8" cy="151.8" r="0.35" fill="#cfd0e8" opacity="0.94"/>
<circle cx="1138.1" cy="152.5" r="0.84" fill="#cfd0e8" opacity="0.94"/>
<circle cx="1136.8" cy="156.6" r="0.62" fill="#cfd0e8" opacity="0.84"/>
<circle cx="1139.3" cy="156.4" r="0.70" fill="#cfd0e8" opacity="0.98"/>
<circle cx="1138.6" cy="151.5" r="0.53" fill="#cfd0e8" opacity="0.58"/>
<circle cx="1138.1" cy="152.1" r="0.50" fill="#cfd0e8" opacity="0.80"/>
<circle cx="1140.8" cy="152.1" r="0.52" fill="#cfd0e8" opacity="0.65"/>
<circle cx="1138.7" cy="150.5" r="0.51" fill="#cfd0e8" opacity="0.74"/>
<circle cx="1369.0" cy="173.9" r="0.84" fill="#cfd0e8" opacity="0.51"/>
<circle cx="1369.0" cy="169.3" r="0.36" fill="#cfd0e8" opacity="0.89"/>
<circle cx="1367.2" cy="176.0" r="0.35" fill="#cfd0e8" opacity="0.52"/>
<circle cx="1371.4" cy="179.1" r="0.45" fill="#cfd0e8" opacity="0.88"/>
<circle cx="1374.0" cy="171.7" r="0.52" fill="#cfd0e8" opacity="0.68"/>
<circle cx="1365.0" cy="173.4" r="0.40" fill="#cfd0e8" opacity="0.87"/>
<circle cx="1370.4" cy="169.4" r="0.37" fill="#cfd0e8" opacity="0.97"/>
<circle cx="1370.0" cy="174.6" r="0.66" fill="#cfd0e8" opacity="0.96"/>
<circle cx="1366.1" cy="178.5" r="0.62" fill="#cfd0e8" opacity="0.66"/>
<circle cx="1368.8" cy="174.4" r="0.39" fill="#cfd0e8" opacity="0.57"/>
<circle cx="1366.8" cy="168.5" r="0.43" fill="#cfd0e8" opacity="0.52"/>
<circle cx="1371.3" cy="173.8" r="0.55" fill="#cfd0e8" opacity="0.62"/>
<circle cx="1365.3" cy="171.5" r="0.58" fill="#cfd0e8" opacity="0.71"/>
<circle cx="1373.9" cy="175.8" r="0.37" fill="#cfd0e8" opacity="0.75"/>
<circle cx="1369.1" cy="173.8" r="0.72" fill="#cfd0e8" opacity="0.97"/>
<circle cx="1366.1" cy="170.9" r="0.40" fill="#cfd0e8" opacity="0.72"/>
<circle cx="1206.8" cy="49.5" r="0.50" fill="#cfd0e8" opacity="0.73"/>
<circle cx="1208.1" cy="47.0" r="0.84" fill="#cfd0e8" opacity="0.73"/>
<circle cx="1202.5" cy="47.2" r="0.59" fill="#cfd0e8" opacity="0.65"/>
<circle cx="1204.8" cy="47.1" r="0.54" fill="#cfd0e8" opacity="0.99"/>
<circle cx="1206.9" cy="46.5" r="0.60" fill="#cfd0e8" opacity="0.67"/>
<circle cx="1205.5" cy="47.3" r="0.74" fill="#cfd0e8" opacity="0.93"/>
<circle cx="1203.2" cy="49.1" r="0.74" fill="#cfd0e8" opacity="0.85"/>
<circle cx="1203.6" cy="44.7" r="0.53" fill="#cfd0e8" opacity="0.85"/>
<circle cx="1427.6" cy="52.0" r="0.73" fill="#cfd0e8" opacity="0.85"/>
<circle cx="1426.5" cy="55.3" r="0.67" fill="#cfd0e8" opacity="0.79"/>
<circle cx="1430.4" cy="50.2" r="0.48" fill="#cfd0e8" opacity="0.84"/>
<circle cx="1423.7" cy="51.0" r="0.67" fill="#cfd0e8" opacity="0.90"/>
<circle cx="1426.2" cy="52.5" r="0.72" fill="#cfd0e8" opacity="0.91"/>
<circle cx="1425.3" cy="53.8" r="0.78" fill="#cfd0e8" opacity="0.84"/>
<circle cx="1433.5" cy="49.2" r="0.61" fill="#cfd0e8" opacity="0.76"/>
<circle cx="1430.3" cy="54.0" r="0.82" fill="#cfd0e8" opacity="0.74"/>
<circle cx="1426.7" cy="46.6" r="0.72" fill="#cfd0e8" opacity="0.59"/>
<circle cx="1428.5" cy="47.4" r="0.68" fill="#cfd0e8" opacity="0.71"/>
<circle cx="1342.1" cy="105.1" r="0.67" fill="#cfd0e8" opacity="0.86"/>
<circle cx="1345.4" cy="108.1" r="0.57" fill="#cfd0e8" opacity="0.83"/>
<circle cx="1345.7" cy="111.3" r="0.67" fill="#cfd0e8" opacity="0.52"/>
<circle cx="1344.4" cy="108.1" r="0.38" fill="#cfd0e8" opacity="0.57"/>
<circle cx="1344.8" cy="108.4" r="0.45" fill="#cfd0e8" opacity="0.52"/>
<circle cx="1343.6" cy="108.3" r="0.66" fill="#cfd0e8" opacity="0.80"/>
<circle cx="1345.4" cy="113.1" r="0.35" fill="#cfd0e8" opacity="0.70"/>
<circle cx="1344.7" cy="109.6" r="0.41" fill="#cfd0e8" opacity="0.92"/>
<circle cx="1480.0" cy="70.0" r="0.66" fill="#cfd0e8" opacity="0.55"/>
<circle cx="1479.4" cy="69.8" r="0.64" fill="#cfd0e8" opacity="0.98"/>
<circle cx="1480.3" cy="69.3" r="0.76" fill="#cfd0e8" opacity="0.82"/>
<circle cx="1479.9" cy="70.1" r="0.65" fill="#cfd0e8" opacity="0.78"/>
<circle cx="1482.8" cy="69.2" r="0.65" fill="#cfd0e8" opacity="0.68"/>
</g>
<clipPath id="landc"><path d="M205 300 L245 262 L262 215 L300 195 L330 215 L345 180 L420 160 L470 175 L520 150 L575 95 L640 70 L720 110 L770 170 L810 240 L838 320 L850 400 L842 470 L815 500 L790 455 L770 450 L760 520 L740 572 L712 550 L690 500 L660 470 L600 482 L560 470 L520 455 L500 440 L460 438 L430 420 L405 400 L385 372 L410 352 L395 330 L350 335 L330 360 L300 330 L270 300 L235 330 L200 335 Z"/><path d="M415 432 L470 425 L505 445 L540 490 L592 512 L565 545 L520 565 L470 585 L448 548 L425 500 L405 462 Z"/><path d="M175 350 L215 338 L262 345 L280 380 L305 402 L350 412 L392 432 L440 416 L455 440 L405 470 L425 520 L448 565 L470 592 L527 590 L505 640 L455 680 L440 715 L425 745 L395 758 L340 745 L295 728 L262 690 L242 640 L228 590 L200 560 L160 540 L130 480 L122 420 L140 375 Z"/><path d="M472 735 L500 718 L520 722 L510 745 L480 756 Z"/></clipPath>
<g clip-path="url(#earthc)">
<circle cx="1225.300" cy="208.200" r="97" fill="#05071a"/>
<g transform="translate(1100 100) scale(.2626)">
<g filter="url(#b2)"><ellipse cx="640" cy="640" rx="190" ry="110" fill="#06081c"/></g>
<g filter="url(#b1)">
<path d="M205 300 L245 262 L262 215 L300 195 L330 215 L345 180 L420 160 L470 175 L520 150 L575 95 L640 70 L720 110 L770 170 L810 240 L838 320 L850 400 L842 470 L815 500 L790 455 L770 450 L760 520 L740 572 L712 550 L690 500 L660 470 L600 482 L560 470 L520 455 L500 440 L460 438 L430 420 L405 400 L385 372 L410 352 L395 330 L350 335 L330 360 L300 330 L270 300 L235 330 L200 335 Z" fill="#7e7552"/>
<path d="M205 300 L245 262 L262 215 L300 195 L330 215 L380 225 L420 260 L440 300 L420 330 L395 330 L350 335 L330 360 L300 330 L270 300 L235 330 L200 335 Z" fill="#43472b"/>
<path d="M420 260 L520 280 L600 290 L640 300 L560 320 L470 330 L440 300 Z" fill="#626240"/>
<path d="M470 330 L560 300 L640 300 L720 290 L790 300 L830 340 L842 420 L800 440 L770 400 L700 410 L660 400 L620 420 L560 400 L500 390 Z" fill="#968462"/>
<path d="M640 330 L720 320 L770 350 L780 400 L720 410 L660 390 Z" fill="#a8946c"/>
<path d="M790 300 L838 320 L850 400 L842 470 L815 500 L790 455 L800 400 Z" fill="#3f4728"/>
<path d="M640 440 L700 430 L770 448 L760 520 L740 572 L712 550 L690 500 L660 470 Z" fill="#7c6e46"/>
<path d="M430 400 L500 385 L560 400 L620 420 L640 450 L600 482 L560 470 L520 455 L500 440 L460 438 Z" fill="#9c8860"/>
<path d="M415 432 L470 425 L505 445 L540 490 L592 512 L565 545 L520 565 L470 585 L448 548 L425 500 L405 462 Z" fill="#b29c72"/>
<path d="M175 350 L215 338 L262 345 L280 380 L305 402 L350 412 L392 432 L440 416 L455 440 L405 470 L425 520 L448 565 L470 592 L527 590 L505 640 L455 680 L440 715 L425 745 L395 758 L340 745 L295 728 L262 690 L242 640 L228 590 L200 560 L160 540 L130 480 L122 420 L140 375 Z" fill="#a68f68"/>
<path d="M150 380 L260 360 L350 420 L400 440 L420 520 L380 560 L280 560 L200 540 L140 480 Z" fill="#b8a077"/>
<path d="M215 575 L300 580 L380 570 L440 590 L470 620 L450 670 L400 700 L330 700 L270 680 L240 630 Z" fill="#494e28"/>
<path d="M300 700 L400 700 L430 730 L395 758 L340 745 L295 728 Z" fill="#7d6c44"/>
<path d="M472 735 L500 718 L520 722 L510 745 L480 756 Z" fill="#8e7c4e"/>
</g>
<rect x="90" y="30" width="780" height="760" clip-path="url(#landc)" filter="url(#tex2)" style="mix-blend-mode:overlay" opacity=".5"/>
<g filter="url(#b1)" fill="#05071a">
<path d="M230 322 L270 302 L300 332 L320 362 L340 392 L392 410 L412 432 L350 414 L305 402 L280 380 L262 345 L215 338 Z"/>
<path d="M300 332 L330 340 L345 375 L385 372 L405 400 L430 420 L392 430 L340 392 Z"/>
<path d="M380 335 L420 328 L452 345 L440 362 L400 360 Z"/>
<path d="M500 328 L522 322 L534 350 L538 390 L515 395 L508 360 Z"/>
<path d="M400 468 L412 464 L450 540 L470 590 L460 595 L435 548 Z"/>
<path d="M508 458 L540 470 L565 492 L550 498 L520 482 Z"/>
<path d="M470 592 L527 578 L565 548 L592 514 L600 485 L640 455 L690 500 L712 550 L740 575 L720 600 L560 640 Z"/>
</g>
<g filter="url(#b2)">
<path d="M225 180 L300 90 L420 45 L560 45 L625 85 L590 130 L555 160 L520 165 L470 180 L420 165 L345 182 L330 215 L300 195 L262 215 L240 250 Z" fill="#04061a"/>
<path d="M335 215 L395 178 L455 175 L500 200 L560 170 L600 120 L660 85 L730 130 L765 210 L745 270 L700 285 L640 290 L600 275 L560 295 L500 280 L440 285 L400 258 L350 240 Z" fill="#b9bec6" opacity=".8"/>
<path d="M590 140 L650 100 L722 140 L750 205 L700 245 L620 235 L575 200 Z" fill="#dfe3e8" opacity=".8"/>
<path d="M430 230 L520 215 L600 240 L640 280 L540 285 L460 275 Z" fill="#e0e3e6" opacity=".55"/>
<path d="M630 335 L690 305 L740 312 L722 352 L670 380 L640 370 Z" fill="#cfd0cc" opacity=".65"/>
</g>
<rect x="90" y="30" width="780" height="760" clip-path="url(#landc)" filter="url(#tex3)" style="mix-blend-mode:multiply" opacity=".38"/>
<g filter="url(#b1)">
<path d="M268 128 L330 94 L420 72 L442 88 L400 108 L320 128 L280 136 Z" fill="#f4f6f8"/>
<path d="M300 146 l16-6 6 10-14 8z M430 112 l22-6 4 10-20 6z M530 98 l34-4 2 9-30 6z M545 78 l40 2-4 10-34-3z" fill="#e4e7ec"/>
<path d="M332 208 L392 172 L452 170 L470 186 L420 202 L380 232 L347 237 Z" fill="#c9ced2" opacity=".75"/>
</g>
</g>
<circle cx="1225.300" cy="208.200" r="97" fill="url(#limb)"/>
<circle cx="1225.300" cy="208.200" r="97" fill="url(#night)"/>
<g transform="translate(1100 100) scale(.2626)" filter="url(#b1)"><path d="M272 128 L330 96 L420 74 L440 88 L400 106 L320 126 L282 135 Z" fill="#f4f6f8" opacity=".9"/><path d="M300 148 l14-5 5 9-12 7z M432 113 l18-5 3 9-16 5z" fill="#e4e7ec" opacity=".8"/></g>
</g>
<g fill="none" stroke-linecap="round" filter="url(#b05)">
<path d="M1281.6 126.2A98.6 97.2 0 0 1 1214.6 304.3" stroke="#c56fa6" stroke-width="2.300"/>
<path d="M1283.2 128.9A97.4 96.6 0 0 1 1311.7 256.3" stroke="#a5805e" stroke-width="1.500" opacity=".9"/>
<path d="M1315.9 245.3A97 96.2 0 0 1 1204.4 302.3" stroke="#7ad476" stroke-width="1.800"/>
</g>
<circle cx="1281.6" cy="125.9" r="3.800" fill="#dd7fbd"/><circle cx="1280.8" cy="125.0" r="1.900" fill="#f3b4dc" opacity=".85"/>
<circle cx="1315.9" cy="245.3" r="4.100" fill="#84ec8a"/><circle cx="1315.3" cy="244.5" r="2" fill="#cdfad0" opacity=".85"/>
<ellipse cx="1138" cy="152.500" rx="3.500" ry="4.500" fill="#cfd0e0" opacity=".55" filter="url(#b1)" transform="rotate(35 1138 152.500)"/>
<g fill="none" stroke="#e8e8ee" stroke-width="1.300" stroke-linejoin="round"><rect x="1476.400" y="50" width="8" height="11" rx="1.500"/><path d="M1474.200 58.500v-9.500c0-.800.600-1.400 1.400-1.400h6.800"/></g>
<path d="M1072.300 408.400V452M1189.900 408.400V452M1307.500 408.400V452M1425.200 408.400V452" stroke="#25253a" stroke-width="1"/>
<text x="1225.700" y="403.300" font-size="13.200" font-weight="bold" fill="#7c7c84" text-anchor="middle" textLength="81.500" lengthAdjust="spacingAndGlyphs">Charge Power</text>
<text x="951.800" y="438.300" font-size="10.500" fill="#6e6e76" text-anchor="middle">0</text>
<clipPath id="chc"><rect x="958" y="405" width="532" height="47"/></clipPath><g clip-path="url(#chc)">
<path d="M960.1 434.9L1130.2 434.9L1130.2 434.9C1132.0 433.2 1136.6 427.9 1141.1 425.1C1145.5 422.3 1152.4 419.2 1156.6 418.2C1160.8 417.2 1162.6 418.5 1166.4 419.3C1170.1 420.1 1173.3 421.2 1179.1 422.9C1184.8 424.6 1195.0 427.4 1200.8 429.4C1206.5 431.4 1208.9 432.9 1213.4 434.9C1218.0 436.8 1222.9 438.7 1227.9 441.0C1232.9 443.3 1240.9 447.3 1243.5 448.6L1243.5 448.6C1244.5 447.9 1247.7 445.7 1249.6 444.6C1251.6 443.5 1252.0 442.9 1255.1 442.1C1258.1 441.2 1263.5 440.3 1267.7 439.6C1271.9 438.8 1275.0 438.2 1280.4 437.7C1285.8 437.3 1294.0 437.0 1300.3 436.7C1306.6 436.4 1308.1 436.2 1318.4 435.9C1328.6 435.7 1344.9 435.4 1361.8 435.2C1378.7 435.0 1410.1 434.9 1419.7 434.9L1489.2 434.9" fill="none" stroke="#efd152" stroke-width="2.300" stroke-linejoin="round" stroke-linecap="round"/>
<path d="M960.1 434.9L1016.9 434.9L1016.9 434.9C1018.7 433.2 1023.4 427.9 1027.8 425.1C1032.2 422.3 1039.1 419.2 1043.3 418.2C1047.6 417.2 1049.4 418.5 1053.1 419.3C1056.8 420.1 1060.0 421.2 1065.8 422.9C1071.5 424.6 1081.8 427.4 1087.5 429.4C1093.2 431.4 1095.6 432.9 1100.2 434.9C1104.7 436.8 1109.6 438.7 1114.6 441.0C1119.6 443.3 1127.6 447.3 1130.2 448.6L1130.2 448.6C1131.2 447.9 1134.4 445.7 1136.3 444.6C1138.3 443.5 1138.8 442.9 1141.8 442.1C1144.8 441.2 1150.2 440.3 1154.4 439.6C1158.7 438.8 1161.7 438.2 1167.1 437.7C1172.5 437.3 1180.7 437.0 1187.0 436.7C1193.3 436.4 1194.9 436.2 1205.1 435.9C1215.4 435.7 1231.7 435.4 1248.5 435.2C1265.4 435.0 1296.8 434.9 1306.5 434.9L1489.2 434.9" fill="none" stroke="#4fa9e6" stroke-width="2.300" stroke-linejoin="round" stroke-linecap="round"/>
<path d="M960.1 434.9L986.1 449.3L986.1 448.6C987.2 447.9 990.4 445.7 992.3 444.6C994.2 443.5 994.7 442.9 997.7 442.1C1000.7 441.2 1006.2 440.3 1010.4 439.6C1014.6 438.8 1017.6 438.2 1023.1 437.7C1028.5 437.3 1036.6 437.0 1043.0 436.7C1049.3 436.4 1050.8 436.2 1061.1 435.9C1071.3 435.7 1087.6 435.4 1104.5 435.2C1121.4 435.0 1152.8 434.9 1162.4 434.9L1385.4 434.9L1385.4 434.9C1387.2 433.2 1391.8 427.9 1396.2 425.1C1400.6 422.3 1407.5 419.2 1411.8 418.2C1416.0 417.2 1417.8 418.5 1421.5 419.3C1425.3 420.1 1428.5 421.2 1434.2 422.9C1439.9 424.6 1450.2 427.4 1455.9 429.4C1461.7 431.4 1464.1 432.9 1468.6 434.9C1473.1 436.8 1478.1 438.7 1483.1 441.0C1488.1 443.3 1496.0 447.3 1498.6 448.6" fill="none" stroke="#64e26a" stroke-width="2.300" stroke-linejoin="round" stroke-linecap="round"/>
<path d="M960.1 434.9L1272.8 434.9L1272.8 434.9C1274.6 433.2 1279.2 427.9 1283.6 425.1C1288.1 422.3 1295.0 419.2 1299.2 418.2C1303.4 417.2 1305.2 418.5 1309.0 419.3C1312.7 420.1 1315.9 421.2 1321.7 422.9C1327.4 424.6 1337.6 427.4 1343.4 429.4C1349.1 431.4 1351.5 432.9 1356.0 434.9C1360.6 436.8 1365.5 438.7 1370.5 441.0C1375.5 443.3 1383.5 447.3 1386.1 448.6L1386.1 448.6C1387.1 447.9 1390.3 445.7 1392.2 444.6C1394.2 443.5 1394.6 442.9 1397.7 442.1C1400.7 441.2 1406.1 440.3 1410.3 439.6C1414.5 438.8 1417.6 438.2 1423.0 437.7C1428.4 437.3 1436.6 437.0 1442.9 436.7C1449.2 436.4 1458.0 436.1 1461.0 435.9L1489.2 434.9" fill="none" stroke="#e25fb4" stroke-width="2.300" stroke-linejoin="round" stroke-linecap="round"/>
<path d="M1385.4 434.9L1489.2 434.9" stroke="#7fb0ec" stroke-width="2" stroke-linecap="round"/>
<path d="M960.1 434.9L1016.9 434.9" stroke="#c880d8" stroke-width="2" stroke-linecap="round"/>
</g>
</svg>
<div class="tabbar"><div class="tab" style="left:0;width:176px"></div>
<svg style="left:18.500px;top:14.500px" width="12" height="11" viewBox="0 0 12 11"><path d="M.500 1h10M.500 3.900h7M.500 6.800h8.500M.500 9.700h5.500" stroke="#c4c4c4" stroke-width="1.200"/></svg>
<span class="abs" style="top:0;line-height:39px;font-size:14.7px;color:#686868;white-space:nowrap;left:35.16px;letter-spacing:0.201px">Julia Plots (4/4)</span>
<svg style="left:155.700px;top:15.500px" width="10" height="10" viewBox="0 0 10 10"><path d="M.700.700l8.600 8.600M9.300.700.700 9.300" stroke="#b4b4b4" stroke-width="1.150" stroke-linecap="round"/></svg>
<svg style="left:549.500px;top:17px" width="14" height="4" viewBox="0 0 14 4"><circle cx="2" cy="2" r="1.150" fill="#444"/><circle cx="6.500" cy="2" r="1.150" fill="#444"/><circle cx="11" cy="2" r="1.150" fill="#444"/></svg>
</div>
</div>

<!-- PANEL -->
<div id="panel">
<div class="abs" style="left:0;top:0;width:1159px;height:38px;background:#f3f3f3;border-top:1px solid #e4e4e4"></div>
<div class="abs" style="left:0;top:1px;width:149px;height:37px;background:#fff"></div>
<svg style="left:18.600000000000023px;top:13.5px" width="11" height="11" viewBox="0 0 11 11"><path d="M.500 1h9.500M.500 3.900h6.500M.500 6.800h8M.500 9.700h5" stroke="#c2c2c2" stroke-width="1.200"/></svg>
<span class="abs" style="top:1px;line-height:37.500px;font-size:14.7px;color:#333;white-space:nowrap;left:34.72px;letter-spacing:0.212px">Dyad Agent</span>
<svg style="left:128.8px;top:14.300000000000011px" width="10" height="10" viewBox="0 0 10 10"><path d="M.700.700l8.600 8.600M9.300.700.700 9.300" stroke="#444" stroke-width="1.250" stroke-linecap="round"/></svg>
<svg style="left:1105px;top:10.899999999999977px" width="14" height="14" viewBox="0 0 14 14"><rect x=".700" y=".700" width="12.600" height="12.600" rx="1.600" fill="none" stroke="#4a4a4a" stroke-width="1.300"/><path d="M7 .700v12.600" stroke="#4a4a4a" stroke-width="1.300"/></svg>
<svg style="left:1131.7px;top:16px" width="14" height="4" viewBox="0 0 14 4"><circle cx="2" cy="2" r="1.150" fill="#444"/><circle cx="6.600" cy="2" r="1.150" fill="#444"/><circle cx="11.200" cy="2" r="1.150" fill="#444"/></svg>
<div class="abs" style="left:58.30000000000001px;top:37px;width:2px;height:231px;background:linear-gradient(#8379d2 0,#8379d2 88%,rgba(131,121,210,.25) 100%)"></div>
<div class="abs" style="left:132.89px;top:51.4px;height:24px;line-height:24px;font-size:16.1px;font-weight:bold;color:#383838;white-space:nowrap;letter-spacing:-0.271px">Ground track map</div>
<div class="abs" style="left:270.99px;top:51.4px;height:24px;line-height:24px;font-size:16.1px;font-weight:normal;color:#444;white-space:nowrap;letter-spacing:0.004px">— Blue Marble background with coastlines. Each of the 4 satellites appears as a colored dot, with positions</div>
<div class="abs" style="left:115.80px;top:51.4px;height:24px;line-height:24px;font-size:16.1px;font-weight:normal;color:#444;white-space:nowrap;letter-spacing:-0.15px">1.</div>
<div class="abs" style="left:132.89px;top:76.4px;height:24px;line-height:24px;font-size:16.1px;font-weight:normal;color:#444;white-space:nowrap;letter-spacing:-0.006px">converted from the model's ECI frame through Earth rotation (ECEF) to lon/lat every frame.</div>
<div class="abs" style="left:132.89px;top:116.1px;height:24px;line-height:24px;font-size:16.1px;font-weight:bold;color:#383838;white-space:nowrap;letter-spacing:-0.068px">Telemetry strip charts</div>
<div class="abs" style="left:302.19px;top:116.1px;height:24px;line-height:24px;font-size:16.1px;font-weight:normal;color:#444;white-space:nowrap;letter-spacing:-0.013px">— Battery SOC (%) and charge power (W) for all 4 satellites, plotted over a rolling 90-minute window. SOC panel</div>
<div class="abs" style="left:115.80px;top:116.1px;height:24px;line-height:24px;font-size:16.1px;font-weight:normal;color:#444;white-space:nowrap;letter-spacing:-0.15px">2.</div>
<div class="abs" style="left:132.89px;top:141.2px;height:24px;line-height:24px;font-size:16.1px;font-weight:normal;color:#444;white-space:nowrap;letter-spacing:0.088px">includes a red band below 20% to flag low-charge conditions.</div>
<div class="abs" style="left:132.89px;top:181.5px;height:24px;line-height:24px;font-size:16.1px;font-weight:bold;color:#383838;white-space:nowrap;letter-spacing:-0.282px">Controls</div>
<div class="abs" style="left:201.40px;top:181.5px;height:24px;line-height:24px;font-size:16.1px;font-weight:normal;color:#444;white-space:nowrap;letter-spacing:-0.083px">— Play/Pause, Reset, and a logarithmic speed slider ranging from ~10x to ~10,000x real time. Status bar shows simulation time,</div>
<div class="abs" style="left:115.80px;top:181.5px;height:24px;line-height:24px;font-size:16.1px;font-weight:normal;color:#444;white-space:nowrap;letter-spacing:-0.15px">3.</div>
<div class="abs" style="left:132.89px;top:206.3px;height:24px;line-height:24px;font-size:16.1px;font-weight:normal;color:#444;white-space:nowrap;letter-spacing:-0.066px">orbit number, how many satellites are sunlit, and average SOC.</div>
<div class="abs" style="left:88.5px;top:247.0px;height:24px;line-height:24px;font-size:16.1px;color:#b4b4b4;white-space:nowrap;letter-spacing:0.058px">The tick loop sub-steps the integrator each frame to maintain accuracy at high speed multipliers, caps the simulation advance per frame, and</div>
<div class="abs" style="left:27px;top:243px;width:1106px;height:25px;background:linear-gradient(rgba(248,248,248,0),rgba(248,248,248,.55))"></div>
<div class="abs" style="left:0;top:268.3px;width:1159px;height:100px;background:#f8f8f8"></div>
<div class="abs" style="left:27.2px;top:267.3px;width:1105px;height:1.100px;background:#c9c5ea"></div>
<div class="abs" style="left:27.2px;top:324.7px;width:1105px;height:1.300px;background:#cfccec"></div>
<div class="abs" style="left:35.0px;top:285.2px;height:24px;line-height:24px;font-size:16.1px;color:#262626;white-space:pre;letter-spacing:0.023px">Create a dashboard that shows me the positions of all the satellites as well as their states of charge.  Make it run the simulation interactively.</div>
<svg style="left:1124.8px;top:60.3px" width="18" height="18" viewBox="0 0 18 18"><g fill="none" stroke="#666" stroke-width="1.200" stroke-linejoin="round"><path d="M7.600 1.200h2.800l.500 2.100 1.300.600 1.900-1.100 2 2-1.100 1.900.600 1.300 2.100.500v2.800l-2.100.500-.600 1.300 1.100 1.900-2 2-1.900-1.100-1.300.600-.500 2.100H7.600l-.500-2.100-1.300-.600-1.900 1.100-2-2 1.100-1.900-.600-1.300-2.100-.500V7.600l2.100-.500.600-1.300-1.100-1.900 2-2 1.900 1.100 1.300-.600z" transform="translate(1.080 1.080) scale(.88)"/><circle cx="9" cy="9" r="2.300"/></g></svg>
<svg style="left:1126.7px;top:102.0px" width="14" height="15" viewBox="0 0 14 15"><path d="M7 .800v9.600M3.200 6.800 7 10.600l3.800-3.800M.800 14h12.400" fill="none" stroke="#666" stroke-width="1.200" stroke-linecap="round" stroke-linejoin="round"/></svg>
<svg style="left:1129.5px;top:144.0px" width="8" height="11" viewBox="0 0 8 11"><path d="M6.300.900 1.500 5.500l4.800 4.600" fill="none" stroke="#666" stroke-width="1.250" stroke-linecap="round" stroke-linejoin="round"/></svg>
</div>

<!-- STATUS -->
<div id="status">
<div class="abs" style="left:0;top:0;width:37.500px;height:25px;background:#3f885c"></div>
<div class="abs" style="left:1279.4px;top:0;width:75.400px;height:25px;background:#1f4170"></div>
<svg style="left:13.5px;top:6.5px" width="11" height="13" viewBox="0 0 11 13"><g fill="none" stroke="#fff" stroke-width="1.150" stroke-linecap="round" stroke-linejoin="round"><path d="M1 6.500l4 3.300-4 3.300" transform="translate(0 -1)"/><path d="M10 .800 6 4.100l4 3.300"/></g></svg>
<svg style="left:44.8px;top:6.3px" width="13" height="14" viewBox="0 0 13 14"><g fill="none" stroke="#fff" stroke-width="1.150" stroke-linecap="round" stroke-linejoin="round"><circle cx="2.800" cy="11" r="1.800"/><circle cx="10.200" cy="3" r="1.800"/><path d="M2.800 9.200V1M10.200 4.800c0 3.400-3.400 4.200-6 5"/></g></svg>
<span class="st" style="font-size:14.1px;left:63.15px;letter-spacing:0.027px;text-shadow:0 0 .4px #fff">main*</span>
<svg style="left:107.3px;top:7.0px" width="14" height="12" viewBox="0 0 14 12"><g fill="none" stroke="#fff" stroke-width="1.150" stroke-linecap="round" stroke-linejoin="round"><path d="M3.600 9.600C2 9.600.800 8.400.800 6.900s1.100-2.600 2.600-2.700C3.900 2.400 5.400 1.100 7.200 1.100c2 0 3.600 1.500 3.800 3.400 1.300.200 2.200 1.300 2.200 2.500 0 1.400-1.200 2.600-2.600 2.600"/><path d="M7 11.200V6M5 7.800l2-2 2 2"/></g></svg>
<svg style="left:137.5px;top:6.0px" width="14" height="15" viewBox="0 0 14 15"><g fill="none" stroke="#fff" stroke-width="1.150" stroke-linecap="round" stroke-linejoin="round"><circle cx="3.600" cy="2.400" r="1.600"/><circle cx="3.600" cy="12.400" r="1.600"/><circle cx="11" cy="7.400" r="1.600"/><path d="M3.600 4v6.800M9.400 7.400H6.800c-1.600 0-1.600-2-3.200-3M6 10.500l2-1.500"/><path d="M7.800 1v4" /></g></svg>
<svg style="left:170.5px;top:6.3px" width="15" height="14" viewBox="0 0 15 14"><g fill="none" stroke="#fff" stroke-width="1.150" stroke-linecap="round" stroke-linejoin="round"><path d="M13.800.800c-3.600 0-6.400 1.600-8.200 5L3 6.600 1.200 9l2.800.200 1.800 1.800.200 2.800L8.400 12l.800-2.600c3.400-1.800 5-4.600 4.600-8.600z"/><circle cx="9.800" cy="4.800" r="1.200"/><path d="M3.400 10.800l-2 2"/></g></svg>
<svg style="left:187.6px;top:6.6px" width="13" height="13" viewBox="0 0 13 13"><g fill="none" stroke="#fff" stroke-width="1.150" stroke-linecap="round" stroke-linejoin="round"><path d="M7.400 2.600l3 3-2.200 2.200c-.800.800-2.200.800-3 0s-.800-2.200 0-3z" transform="rotate(0)"/><path d="M9 1.200l2.800 2.800M5.200 7.800 1 12M10.600 1l1.400 1.400" /><circle cx="3" cy="10" r="1.600"/></g></svg>
<span class="st" style="font-size:14.1px;left:204.75px;letter-spacing:0.0px;text-shadow:0 0 .4px #fff">Launchpad</span>
<span class="st" style="font-size:14.1px;left:291.95px;letter-spacing:0.009px;text-shadow:0 0 .4px #fff">SatelliteComponents</span>
<svg style="left:441.2px;top:6.5px" width="14" height="14" viewBox="0 0 14 14"><g fill="none" stroke="#fff" stroke-width="1.150" stroke-linecap="round" stroke-linejoin="round"><circle cx="7" cy="7" r="6"/><path d="M4.700 4.700l4.600 4.600M9.300 4.700 4.700 9.300"/></g></svg>
<span class="st" style="font-size:14.1px;left:458.95px;letter-spacing:0.645px;text-shadow:0 0 .4px #fff">0</span>
<svg style="left:472.6px;top:6.5px" width="14" height="14" viewBox="0 0 14 14"><g fill="none" stroke="#fff" stroke-width="1.150" stroke-linecap="round" stroke-linejoin="round"><path d="M7 1.400 13 12.400H1z"/><path d="M7 5.400v3.600M7 10.600v.200"/></g></svg>
<span class="st" style="font-size:14.1px;left:490.55px;letter-spacing:0.745px;text-shadow:0 0 .4px #fff">0</span>
<svg style="left:504.0px;top:6.5px" width="14" height="14" viewBox="0 0 14 14"><g fill="none" stroke="#fff" stroke-width="1.150" stroke-linecap="round" stroke-linejoin="round"><circle cx="7" cy="7" r="6"/><path d="M7 6.400v3.800M7 3.900v.200"/></g></svg>
<span class="st" style="font-size:14.1px;left:522.55px;letter-spacing:0.251px;text-shadow:0 0 .4px #fff">49</span>
<svg style="left:557.0px;top:6.0px" width="15" height="15" viewBox="0 0 15 15"><g fill="none" stroke="#fff" stroke-width="1.150" stroke-linecap="round" stroke-linejoin="round"><path d="M9 1.200 13.800 5 9 8.800V6.400C5 6.400 2.600 7.600 1 10c.400-3.800 3-6.400 8-6.600z"/><circle cx="5.200" cy="12" r="1.900"/></g></svg>
<span class="st" style="font-size:14.1px;left:575.65px;letter-spacing:-0.232px;text-shadow:0 0 .4px #fff">Live Share</span>
<span class="st" style="font-size:14.1px;left:658.95px;letter-spacing:-0.03px;text-shadow:0 0 .4px #fff">Julia env: SatelliteComponents</span>
<svg style="left:1291.4px;top:6.5px" width="14" height="14" viewBox="0 0 14 14"><g fill="none" stroke="#fff" stroke-width="1.150" stroke-linecap="round" stroke-linejoin="round"><circle cx="5.600" cy="5.600" r="4.600"/><path d="M9 9l4 4M3.400 5.600h4.400M5.600 3.400v4.400"/></g></svg>
<svg style="left:1329.0px;top:6.5px" width="14" height="14" viewBox="0 0 14 14"><g fill="none" stroke="#fff" stroke-width="1.150" stroke-linecap="round" stroke-linejoin="round"><circle cx="5.600" cy="5.600" r="4.600"/><path d="M9 9l4 4M3.400 5.600h4.400M5.600 3.400v4.400"/></g></svg>
<svg style="left:1364.8px;top:6.3px" width="14" height="15" viewBox="0 0 14 15"><g fill="none" stroke="#fff" stroke-width="1.150" stroke-linecap="round" stroke-linejoin="round"><path d="M7 1.200c-2.600 0-4.200 2-4.200 4.400v3.200L1.400 11.200h11.200l-1.400-2.400V5.600C11.200 3.200 9.600 1.200 7 1.200zM5.600 11.400c0 .800.600 1.800 1.400 1.800s1.400-1 1.400-1.800"/></g></svg>
</div>
</body>
</html>
